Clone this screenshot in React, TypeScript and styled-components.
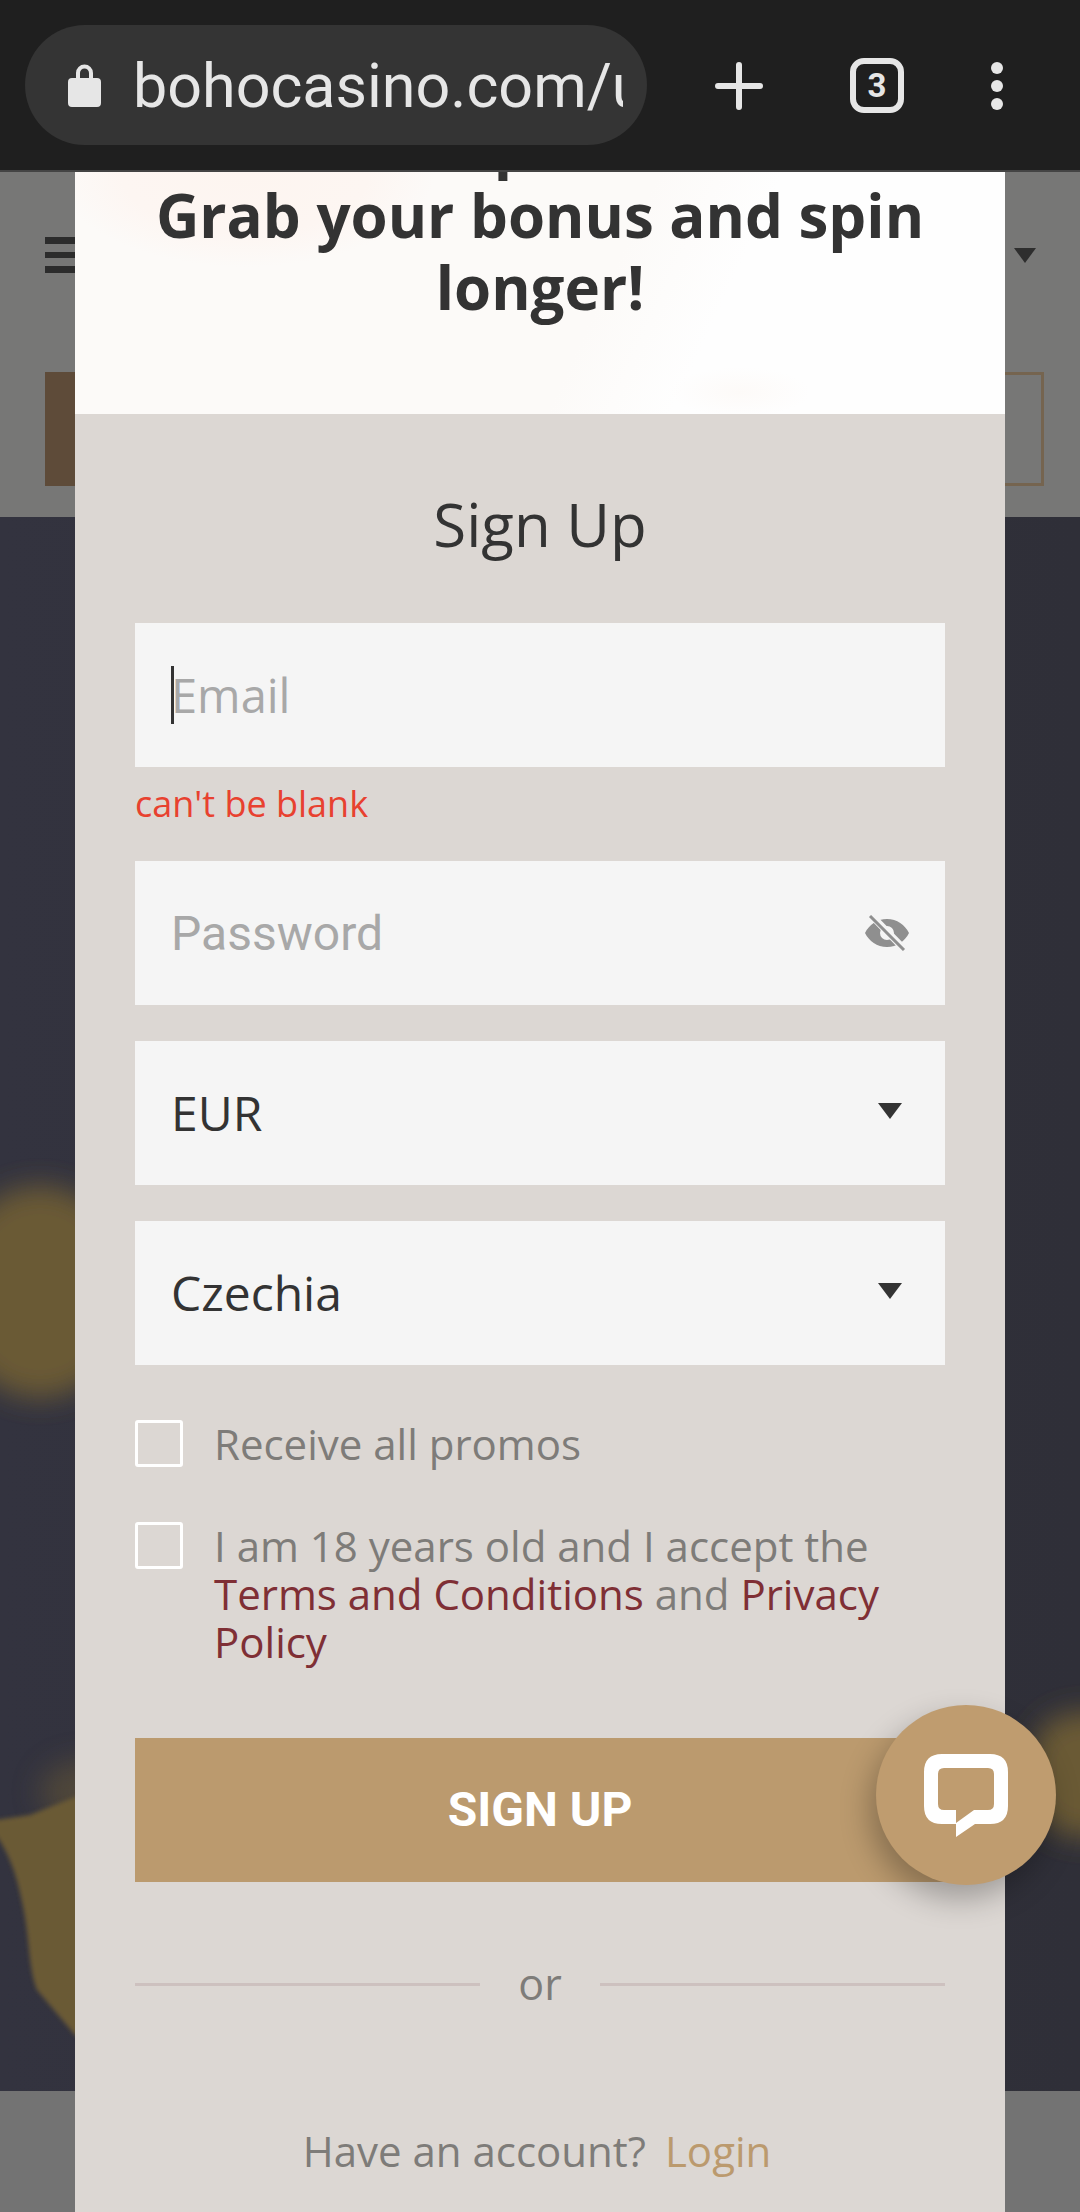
import React from 'react';
import styled, { createGlobalStyle } from 'styled-components';

const GlobalStyle = createGlobalStyle`
    html, body {
        margin: 0;
        padding: 0;
        width: 1080px;
        height: 2212px;
        overflow: hidden;
        background: #1f1f1f;
    }
    * {
        box-sizing: border-box;
    }
`;

const openSans = `"Open Sans", "Liberation Sans", sans-serif`;
const roboto = `Roboto, "Liberation Sans", sans-serif`;

const Screen = styled.div`
    position: relative;
    width: 1080px;
    height: 2212px;
    overflow: hidden;
    display: flex;
    flex-direction: column;
`;

const BrowserBar = styled.header`
    height: 172px;
    flex: none;
    display: flex;
    align-items: flex-start;
    padding: 25px 0 0 25px;
    background: #1f1f1f;
    border-bottom: 2px solid #444;
`;

const UrlPill = styled.div`
    width: 622px;
    height: 120px;
    flex: none;
    display: flex;
    align-items: center;
    gap: 32px;
    padding: 0 24px 0 43px;
    border-radius: 60px;
    background: #343434;
`;

const UrlText = styled.div`
    flex: 1;
    min-width: 0;
    overflow: hidden;
    white-space: nowrap;
    padding-top: 3px;
    font: 400 61px/117px ${roboto};
    color: #e6e6e6;
`;

const BarIcon = styled.svg`
    display: block;
    flex: none;
`;

const BarActions = styled.div`
    margin-top: 33px;
    margin-left: 68px;
    display: flex;
    align-items: center;
    gap: 87px;
`;

const TabCount = styled.div`
    width: 54px;
    height: 55px;
    border: 6px solid #e6e6e6;
    border-radius: 14px;
    display: flex;
    align-items: center;
    justify-content: center;
    font: 700 33px/1 ${roboto};
    color: #e6e6e6;
`;

const Site = styled.main`
    flex: 1;
    display: flex;
    flex-direction: column;
    min-height: 0;
`;

const SiteHeader = styled.div`
    height: 345px;
    flex: none;
    background: #777776;
    padding: 65px 36px 31px 45px;
    display: flex;
    flex-direction: column;
    justify-content: space-between;
`;

const HeaderTop = styled.div`
    display: flex;
    align-items: center;
    justify-content: space-between;
    padding-right: 8px;
`;

const Burger = styled.div`
    width: 30px;
    height: 36px;
    background: repeating-linear-gradient(#2c2c2c 0 7px, transparent 7px 14.5px);
`;

const HeaderCaret = styled.div`
    width: 0;
    height: 0;
    border-left: 11px solid transparent;
    border-right: 11px solid transparent;
    border-top: 15px solid #2e2e2e;
`;

const HeaderButtons = styled.div`
    height: 114px;
    display: flex;
`;

const GhostButton = styled.div<{ $filled?: boolean }>`
    flex: 1;
    background: ${(p) => (p.$filled ? '#5e4b39' : 'transparent')};
    border: ${(p) => (p.$filled ? 'none' : '3px solid #75644f')};
`;

const Hero = styled.div`
    position: relative;
    flex: 1;
    overflow: hidden;
    background: linear-gradient(90deg, #33333f 0%, #2f2f38 100%);
`;

const HeroArt = styled.svg`
    position: absolute;
    inset: 0;
    display: block;
`;

const SiteFooter = styled.div`
    height: 121px;
    flex: none;
    background: #737373;
`;

const Modal = styled.section`
    position: absolute;
    left: 75px;
    top: 172px;
    width: 930px;
    height: 2040px;
    overflow: hidden;
    background: #dcd7d3;
`;

const ModalHead = styled.div`
    height: 242px;
    overflow: hidden;
    padding: 0 60px;
    background:
        radial-gradient(ellipse 190px 95px at 170px 0, #fdf5f0 0%, #fdf6f2 65%, transparent 100%),
        radial-gradient(ellipse 70px 25px at 665px 220px, #fdfaf8 0%, transparent 100%),
        linear-gradient(115deg, #fcfaf8 0%, #fcfaf8 56%, #fefefe 68%);
`;

const Headline = styled.h2`
    margin: -65px 0 0;
    text-align: center;
    font: 700 60px/72px ${openSans};
    color: #333;
`;

const ModalBody = styled.div`
    padding: 0 60px;
    display: flex;
    flex-direction: column;
`;

const Title = styled.h1`
    margin: 69px 0 0;
    height: 82px;
    text-align: center;
    font: 400 60px/82px ${openSans};
    color: #333;
`;

const Field = styled.div<{ $mt: number }>`
    position: relative;
    height: 144px;
    margin-top: ${(p) => p.$mt}px;
    flex: none;
    display: flex;
    align-items: center;
    justify-content: space-between;
    padding: 0 36px;
    background: #f5f5f5;
`;

const FieldInput = styled.input<{ $roboto?: boolean }>`
    flex: 1;
    min-width: 0;
    border: 0;
    outline: 0;
    padding: ${(p) => (p.$roboto ? '2px 0 0' : '0')};
    background: transparent;
    font: 400 ${(p) => (p.$roboto ? '48px' : '47px')}/60px ${(p) => (p.$roboto ? roboto : openSans)};
    color: #333;
    &::placeholder {
        color: #a8a8a8;
        opacity: 1;
    }
`;

const TextCaret = styled.span`
    position: absolute;
    left: 36px;
    top: 43px;
    width: 3px;
    height: 58px;
    background: #333;
`;

const FieldError = styled.div`
    margin-top: 12px;
    height: 56px;
    font: 400 36px/50px ${openSans};
    color: #e8412f;
`;

const SelectValue = styled.span`
    font: 400 48px/60px ${openSans};
    color: #333;
`;

const SelectArrow = styled.span`
    width: 0;
    height: 0;
    margin-right: 7px;
    margin-top: -5px;
    border-left: 12px solid transparent;
    border-right: 12px solid transparent;
    border-top: 16px solid #333;
`;

const CheckRow = styled.label<{ $mt: number }>`
    display: flex;
    gap: 31px;
    margin-top: ${(p) => p.$mt}px;
`;

const CheckBox = styled.span`
    width: 48px;
    height: 47px;
    flex: none;
    border: 3px solid #fff;
    border-radius: 3px;
`;

const CheckLabel = styled.span`
    font: 400 42px/48px ${openSans};
    color: #7e7c79;
`;

const TermLink = styled.a`
    color: #7f2f35;
    text-decoration: none;
`;

const SubmitButton = styled.button`
    height: 144px;
    margin-top: 72px;
    flex: none;
    border: 0;
    padding: 0;
    background: #bb9a6e;
    font: 700 48px/1 ${roboto};
    color: #fff;
`;

const OrRow = styled.div`
    margin-top: 75px;
    height: 54px;
    display: flex;
    align-items: center;
    gap: 38px;
    font: 400 43px/54px ${openSans};
    color: #7e7c79;
    &::before,
    &::after {
        content: '';
        flex: 1;
        height: 3px;
        background: #cdc1bf;
    }
`;

const AccountRow = styled.div`
    margin-top: 112px;
    padding-right: 6px;
    display: flex;
    justify-content: center;
    gap: 19px;
    font: 400 42px/56px ${openSans};
    color: #7e7c79;
`;

const LoginLink = styled.a`
    color: #bb9a6e;
    text-decoration: none;
`;

const ChatBubble = styled.button`
    position: absolute;
    left: 876px;
    top: 1705px;
    width: 180px;
    height: 180px;
    border: 0;
    padding: 0;
    border-radius: 50%;
    background: #bf9c6f;
    box-shadow: -6px 14px 30px rgba(0, 0, 0, 0.28);
    display: flex;
    align-items: center;
    justify-content: center;
`;

// watercolor shapes behind the modal, coordinates are relative to the hero
const HeroBlobs = () => (
    <HeroArt width="1080" height="1574" viewBox="0 0 1080 1574">
        <defs>
            <filter id="softBig" x="-50%" y="-50%" width="200%" height="200%">
                <feGaussianBlur stdDeviation="14" />
            </filter>
            <filter id="softSmall" x="-10%" y="-10%" width="120%" height="120%">
                <feGaussianBlur stdDeviation="2" />
            </filter>
        </defs>
        <ellipse cx="40" cy="775" rx="90" ry="106" fill="#6b5a35" filter="url(#softBig)" />
        <rect x="1030" y="1195" width="120" height="125" rx="50" fill="#6b5a35" filter="url(#softBig)" />
        <ellipse cx="85" cy="1275" rx="45" ry="32" fill="#6b5a35" opacity="0.5" filter="url(#softBig)" />
        <path
            d="M-4 1303L30 1298L100 1270V1530L75 1518L37 1473C28 1450 30 1420 22 1385C16 1355 8 1335 -4 1318Z"
            fill="#6b5a35"
            filter="url(#softSmall)"
        />
    </HeroArt>
);

export default function App() {
    return (
        <Screen>
            <GlobalStyle />
            <BrowserBar>
                <UrlPill>
                    <BarIcon width="33" height="44" viewBox="0 0 33 44">
                        <path
                            fill="#e6e6e6"
                            fillRule="evenodd"
                            d="M8 15V10a8.500 8.500 0 0 1 17 0v5h4a4 4 0 0 1 4 4v21a4 4 0 0 1-4 4H4a4 4 0 0 1-4-4V19a4 4 0 0 1 4-4zM12 15h9V10a4.500 4.500 0 0 0-9 0z"
                        />
                    </BarIcon>
                    <UrlText>bohocasino.com/users/sign_up</UrlText>
                </UrlPill>
                <BarActions>
                    <BarIcon width="48" height="48" viewBox="0 0 48 48">
                        <path d="M24 3v42M3 24h42" stroke="#e6e6e6" strokeWidth="6" strokeLinecap="round" />
                    </BarIcon>
                    <TabCount>3</TabCount>
                    <BarIcon width="12" height="48" viewBox="0 0 12 48">
                        <circle cx="6" cy="6" r="6" fill="#e6e6e6" />
                        <circle cx="6" cy="24" r="6" fill="#e6e6e6" />
                        <circle cx="6" cy="42" r="6" fill="#e6e6e6" />
                    </BarIcon>
                </BarActions>
            </BrowserBar>

            <Site>
                <SiteHeader>
                    <HeaderTop>
                        <Burger />
                        <HeaderCaret />
                    </HeaderTop>
                    <HeaderButtons>
                        <GhostButton $filled />
                        <GhostButton />
                    </HeaderButtons>
                </SiteHeader>
                <Hero>
                    <HeroBlobs />
                </Hero>
                <SiteFooter />
            </Site>

            <Modal>
                <ModalHead>
                    <Headline>
                        Spins
                        <br />
                        Grab your bonus and spin longer!
                    </Headline>
                </ModalHead>
                <ModalBody>
                    <Title>Sign Up</Title>
                    <Field $mt={58}>
                        <FieldInput placeholder="Email" readOnly />
                        <TextCaret />
                    </Field>
                    <FieldError>can't be blank</FieldError>
                    <Field $mt={26}>
                        <FieldInput $roboto placeholder="Password" readOnly />
                        <svg width="44" height="36" viewBox="0 0 44 36">
                            <path
                                fill="#8f8f8f"
                                fillRule="evenodd"
                                d="M22 4C32 4 40 10 44 18C40 26 32 32 22 32C12 32 4 26 0 18C4 10 12 4 22 4ZM22 11a7 7 0 1 0 0 14a7 7 0 1 0 0-14Z"
                            />
                            <path d="M6 0L40 35" stroke="#f5f5f5" strokeWidth="7" />
                            <path d="M5 1L39 35" stroke="#8f8f8f" strokeWidth="3" />
                        </svg>
                    </Field>
                    <Field $mt={36}>
                        <SelectValue>EUR</SelectValue>
                        <SelectArrow />
                    </Field>
                    <Field $mt={36}>
                        <SelectValue>Czechia</SelectValue>
                        <SelectArrow />
                    </Field>
                    <CheckRow $mt={55}>
                        <CheckBox />
                        <CheckLabel>Receive all promos</CheckLabel>
                    </CheckRow>
                    <CheckRow $mt={54}>
                        <CheckBox />
                        <CheckLabel>
                            I am 18 years old and I accept the <TermLink>Terms and Conditions</TermLink> and{' '}
                            <TermLink>Privacy Policy</TermLink>
                        </CheckLabel>
                    </CheckRow>
                    <SubmitButton>SIGN UP</SubmitButton>
                    <OrRow>or</OrRow>
                    <AccountRow>
                        <span>Have an account?</span>
                        <LoginLink>Login</LoginLink>
                    </AccountRow>
                </ModalBody>
            </Modal>

            <ChatBubble>
                <svg width="84" height="83" viewBox="0 0 84 83">
                    <path
                        fill="#fff"
                        fillRule="evenodd"
                        d="M18 0H66Q84 0 84 18V52Q84 70 66 70H51L32 83V70H18Q0 70 0 52V18Q0 0 18 0ZM20 14Q14 14 14 20V50Q14 56 20 56H32V69L50 56H64Q70 56 70 50V20Q70 14 64 14Z"
                    />
                </svg>
            </ChatBubble>
        </Screen>
    );
}
